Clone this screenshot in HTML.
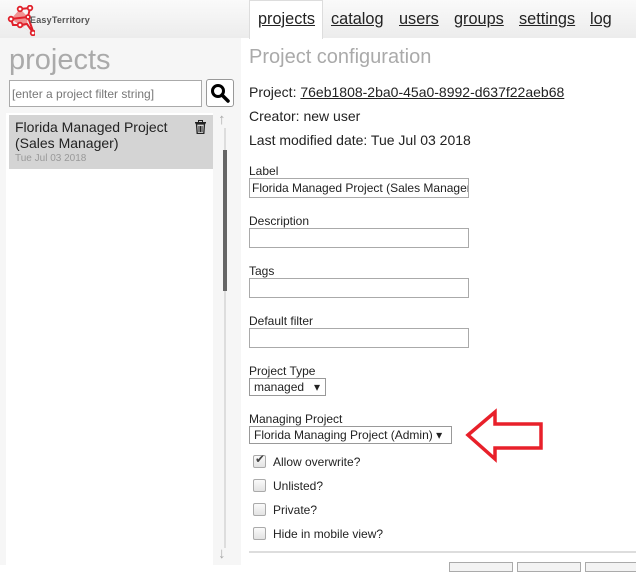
<!DOCTYPE html>
<html><head><style>
*{margin:0;padding:0;box-sizing:border-box}
body{width:636px;height:565px;overflow:hidden;font-family:"Liberation Sans",Arial,sans-serif;background:#fff;position:relative;color:#222}
.hdr{position:absolute;left:0;top:0;width:636px;height:38px;background:linear-gradient(#fafafa,#ececec)}
.left{position:absolute;left:0;top:38px;width:241px;height:527px;background:#f6f6f6}
.tab{position:absolute;left:249px;top:0;width:74px;height:39px;background:#fff;border:1px solid #ddd;border-bottom:none}
.nav a{position:absolute;top:10px;font-size:16.3px;color:#222;text-decoration:underline}
.abs{position:absolute}
.inp{position:absolute;left:249px;width:220px;height:20px;border:1px solid #aaa;background:#fff;font-size:12px;padding:2px 2px;white-space:nowrap;overflow:hidden}
.lbl{position:absolute;left:249px;font-size:12px}
.cb{position:absolute;left:253px;width:13px;height:13px;border:1px solid #aaa;border-radius:2px;background:linear-gradient(#fafafa,#e3e3e3)}
.ct{position:absolute;left:273px;font-size:12px}
.sel{position:absolute;left:249px;height:18px;border:1px solid #999;background:#fff;font-size:12px;padding:1px 4px}
</style></head><body>
<div class="hdr"></div>
<svg class="abs" style="left:7px;top:5px" width="28" height="31" viewBox="0 0 28 31">
<polygon points="4,14 13,4 21,12 20,19 16,22 26,29" fill="#f08080" opacity=".85"/>
<polyline points="13,4 23,3 21,12 4,14 6,20 13,20 20,19 27,29 21,12" fill="none" stroke="#e0202a" stroke-width="2"/>
<g fill="#fff" stroke="#e0202a" stroke-width="1.8"><circle cx="13" cy="4" r="2.3"/><circle cx="23" cy="3" r="2.3"/><circle cx="4" cy="14" r="2.3"/><circle cx="13" cy="20" r="2.3"/><circle cx="21" cy="12" r="2"/><circle cx="26" cy="28" r="2.3"/></g></svg>
<div class="abs" style="left:30px;top:15px;font-size:9px;font-weight:bold;color:#555;letter-spacing:.2px">EasyTerritory</div>
<div class="tab"></div>
<div class="nav"><a style="left:258px">projects</a><a style="left:331px">catalog</a><a style="left:399px">users</a><a style="left:454px">groups</a><a style="left:519px">settings</a><a style="left:590px">log</a></div>
<div class="left"></div>
<div class="abs" style="left:9px;top:44px;font-size:29px;color:#aaa">projects</div>
<div class="abs" style="left:9px;top:80px;width:193px;height:27px;border:1px solid #aaa;background:#fff;font-size:12px;color:#777;padding:6px 2px">[enter a project filter string]</div>
<div class="abs" style="left:206px;top:79px;width:28px;height:28px;border:1px solid #999;border-radius:3px;background:#fff"></div>
<svg class="abs" style="left:210px;top:83px" width="20" height="20" viewBox="0 0 20 20"><circle cx="8" cy="8" r="5.5" fill="none" stroke="#000" stroke-width="3"/><line x1="12" y1="12" x2="18" y2="18" stroke="#000" stroke-width="3.5" stroke-linecap="round"/></svg>
<div class="abs" style="left:6px;top:113px;width:207px;height:452px;background:#fff"></div>
<div class="abs" style="left:9px;top:115px;width:204px;height:54px;background:#d4d4d4"></div>
<div class="abs" style="left:15px;top:119px;font-size:14px;line-height:16px;color:#222">Florida Managed Project<br>(Sales Manager)</div>
<div class="abs" style="left:15px;top:153px;font-size:10px;color:#999">Tue Jul 03 2018</div>
<svg class="abs" style="left:194px;top:120px" width="13" height="14" viewBox="0 0 13 14"><rect x="1" y="2" width="11" height="1.5" fill="#222"/><rect x="4.5" y="0.5" width="4" height="2" fill="none" stroke="#222"/><path d="M2.5 4h8l-.7 9.5h-6.6z" fill="none" stroke="#222" stroke-width="1.3"/><path d="M5 6v6M6.5 6v6M8 6v6" stroke="#222"/></svg>
<div class="abs" style="left:224px;top:128px;width:2px;height:420px;background:#ddd"></div>
<div class="abs" style="left:223px;top:150px;width:4px;height:141px;background:#666"></div>
<div class="abs" style="left:218px;top:111px;font-size:15px;color:#aaa">↑</div>
<div class="abs" style="left:218px;top:545px;font-size:15px;color:#aaa">↓</div>
<div class="abs" style="left:249px;top:46px;font-size:20px;color:#aaa">Project configuration</div>
<div class="abs" style="left:249px;top:84px;font-size:14px">Project: <span style="text-decoration:underline">76eb1808-2ba0-45a0-8992-d637f22aeb68</span></div>
<div class="abs" style="left:249px;top:108px;font-size:14px">Creator: new user</div>
<div class="abs" style="left:249px;top:132px;font-size:14px">Last modified date: Tue Jul 03 2018</div>
<div class="lbl" style="top:164px">Label</div><div class="inp" style="top:178px">Florida Managed Project (Sales Manager)</div>
<div class="lbl" style="top:214px">Description</div><div class="inp" style="top:228px"></div>
<div class="lbl" style="top:264px">Tags</div><div class="inp" style="top:278px"></div>
<div class="lbl" style="top:314px">Default filter</div><div class="inp" style="top:328px"></div>
<div class="lbl" style="top:364px">Project Type</div><div class="sel" style="top:378px;width:77px">managed&nbsp;&nbsp; ▾</div>
<div class="lbl" style="top:412px">Managing Project</div><div class="sel" style="top:426px;width:203px">Florida Managing Project (Admin) ▾</div>
<svg class="abs" style="left:464px;top:408px" width="80" height="56" viewBox="0 0 80 56"><path d="M4 27L31 4V16H77V40H31V51Z" fill="none" stroke="#e8202a" stroke-width="3.5" stroke-linejoin="miter"/></svg>
<div class="cb" style="top:455px"></div><div class="abs" style="left:255px;top:452px;font-size:12px;color:#444">✔</div><div class="ct" style="top:455px">Allow overwrite?</div>
<div class="cb" style="top:479px"></div><div class="ct" style="top:479px">Unlisted?</div>
<div class="cb" style="top:503px"></div><div class="ct" style="top:503px">Private?</div>
<div class="cb" style="top:527px"></div><div class="ct" style="top:527px">Hide in mobile view?</div>
<div class="abs" style="left:249px;top:551px;width:387px;height:2px;background:#ddd"></div>
<div class="abs" style="left:449px;top:562px;width:64px;height:10px;border:1px solid #aaa;background:#f3f3f3"></div>
<div class="abs" style="left:517px;top:562px;width:64px;height:10px;border:1px solid #aaa;background:#f3f3f3"></div>
<div class="abs" style="left:585px;top:562px;width:60px;height:10px;border:1px solid #aaa;background:#f3f3f3"></div>
</body></html>
